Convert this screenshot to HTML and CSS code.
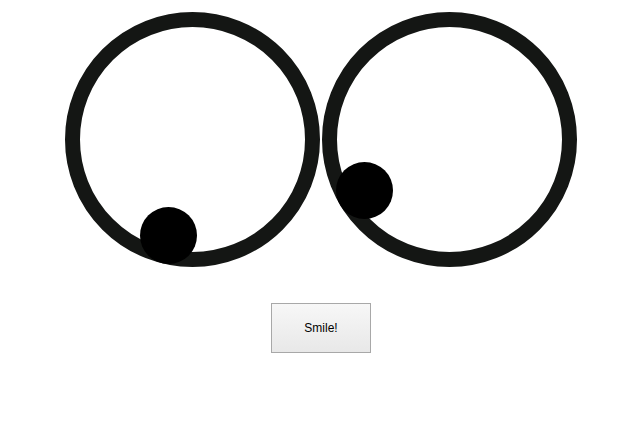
FILE: index.html
```html
<!DOCTYPE html>
<html>
<head>
<meta charset="utf-8">
<link rel="stylesheet" href="styles.css">
</head>
<body>
<div class="eyes">
  <div class="eye"><div class="pupil pupil-left"></div></div>
  <div class="eye"><div class="pupil pupil-right"></div></div>
</div>
<div class="actions">
  <button class="smile">Smile!</button>
</div>
</body>
</html>
```
FILE: styles.css
```css
html, body {
  margin: 0;
  padding: 0;
  background: #fff;
}
body {
  width: 641px;
  height: 426px;
  overflow: hidden;
  font-family: "Liberation Sans", Arial, sans-serif;
}
.eyes {
  display: flex;
  justify-content: center;
  gap: 2px;
  padding-top: 12px;
  padding-left: 1px;
}
.eye {
  position: relative;
  box-sizing: border-box;
  width: 255px;
  height: 255px;
  border: 15px solid #141614;
  border-radius: 50%;
}
.pupil {
  position: absolute;
  width: 57px;
  height: 57px;
  border-radius: 50%;
  background: #000;
}
.pupil-left {
  left: 60px;
  top: 180px;
}
.pupil-right {
  left: -1px;
  top: 135px;
}
.actions {
  display: flex;
  justify-content: center;
  padding-top: 36px;
  padding-left: 1px;
}
.smile {
  box-sizing: border-box;
  width: 100px;
  height: 50px;
  border: 1px solid #a8a8a8;
  background: linear-gradient(#f7f7f7, #e8e8e8);
  font-family: "Liberation Sans", Arial, sans-serif;
  font-size: 12px;
  color: #000;
  padding: 0;
  margin: 0;
}
```
